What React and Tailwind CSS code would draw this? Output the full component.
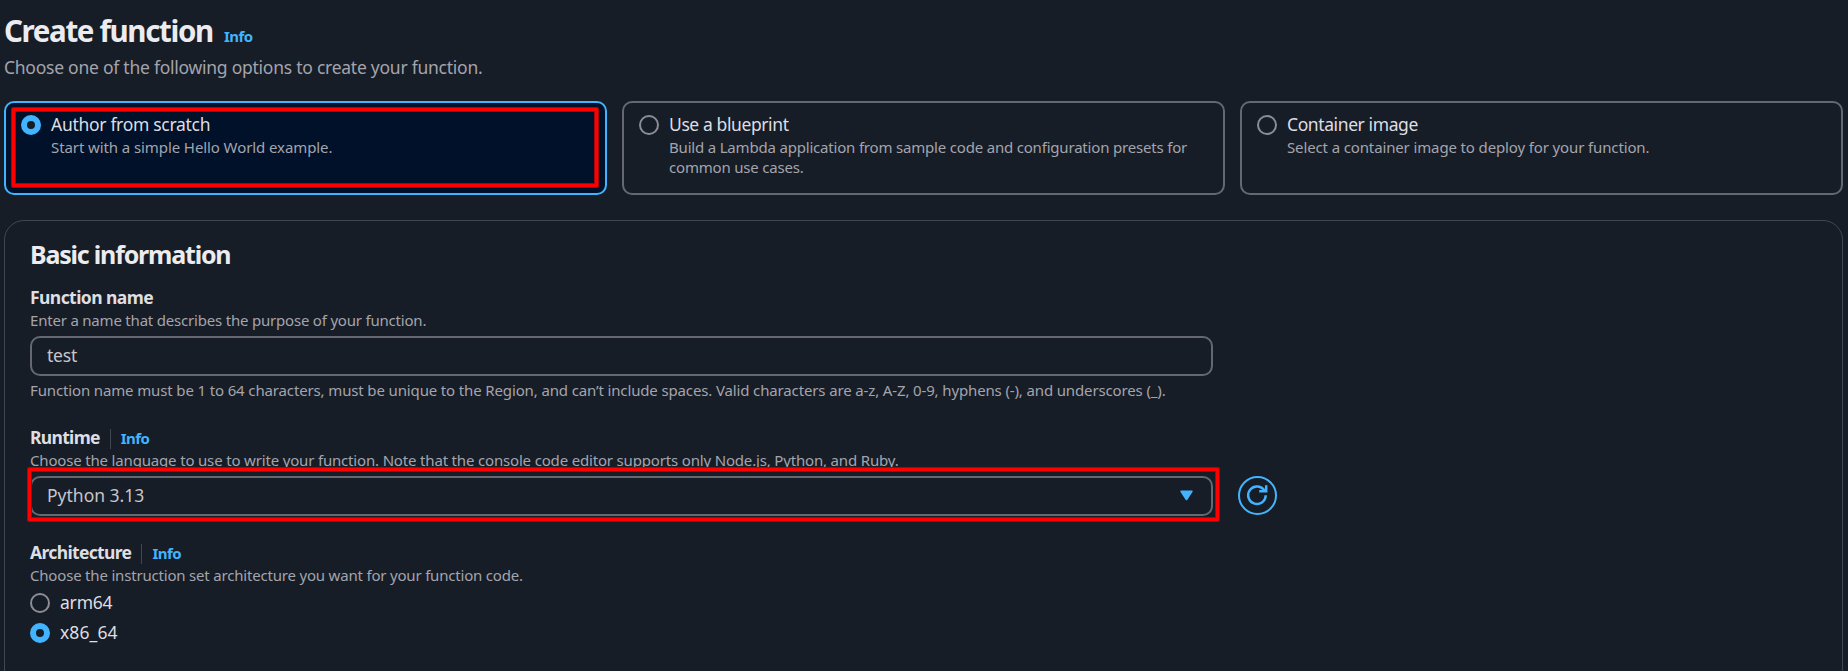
const HINT = 'block text-[15px] leading-5 text-[#a4a4ad]';
const LABEL = 'text-[17.5px] leading-[25px]';

function Radio({ checked }) {
  return checked ? (
    <span className="mt-[3px] size-5 shrink-0 rounded-full border-[6px] border-[#42b4ff] bg-[#161d26]" />
  ) : (
    <span className="mt-[3px] size-5 shrink-0 rounded-full border-2 border-[#8c8c94]" />
  );
}

function Info({ className = '' }) {
  return (
    <a className={'text-[15px] leading-5 font-bold tracking-[-0.55px] text-[#42b4ff] ' + className}>Info</a>
  );
}

function Highlight({ className }) {
  return (
    <span
      className={
        'pointer-events-none absolute rounded-[1px] border-[3px] border-[#ff0000] shadow-[0_0_0_1px_#a8060a,inset_0_0_0_1px_#a8060a] ' +
        className
      }
    />
  );
}

function Tile({ title, titleClass, text, textClass, checked }) {
  return (
    <div
      className={
        'relative flex h-[94px] gap-[10px] rounded-[10px] border-2 pt-[9px] pr-[15px] pl-[15px] ' +
        (checked ? 'border-[#42b4ff] bg-[#001129]' : 'border-[#656871]')
      }
    >
      <Radio checked={checked} />
      <div className="min-w-0">
        <div className={LABEL + ' ' + titleClass}>{title}</div>
        <div className={HINT + ' ' + textClass}>{text}</div>
      </div>
      {checked && <Highlight className="top-[5px] right-[7px] bottom-[6px] left-[6px]" />}
    </div>
  );
}

function FieldHeader({ children, className }) {
  return (
    <div className="flex h-[25px] items-start">
      <span className={LABEL + ' font-bold text-[#dedee3] ' + className}>{children}</span>
      <span className="mt-1 ml-[10px] h-5 w-px bg-[#424650]" />
      <Info className="mt-[3px] ml-[10px]" />
    </div>
  );
}

function RefreshButton() {
  return (
    <button className="ml-[25px] flex size-[39px] items-center justify-center rounded-full border-2 border-[#42b4ff]">
      <svg viewBox="0 0 21 21" className="size-[21px] fill-none stroke-[#42b4ff] stroke-[2.5]">
        <path d="M18.7 10.3A8.75 8.75 0 1 1 17.6 6" />
        <path d="M19.2 0.3V6.3H12.2" />
      </svg>
    </button>
  );
}

export default function App() {
  return (
    <main className="h-[671px] w-full overflow-hidden bg-[#161d26] pt-[13px] pr-[5px] pl-1 font-['Noto_Sans','Open_Sans',sans-serif] text-[#dedee3]">
      <header>
        <div className="flex h-9 items-baseline">
          <h1 className="w-[210px] text-[29.5px] leading-9 font-bold tracking-[-1.35px] whitespace-nowrap text-[#ebebf0]">
            Create function
          </h1>
          <Info className="ml-[10px]" />
        </div>
        <p className="mt-[6px] text-[17.5px] leading-[25px] tracking-[-0.25px] text-[#a4a4ad]">
          Choose one of the following options to create your function.
        </p>
      </header>

      <section className="mt-[21px] grid grid-cols-3 gap-[15px]">
        <Tile
          checked
          title="Author from scratch"
          titleClass="tracking-[-0.3px]"
          text="Start with a simple Hello World example."
          textClass="tracking-[-0.09px]"
        />
        <Tile
          title="Use a blueprint"
          titleClass="tracking-[-0.4px]"
          text="Build a Lambda application from sample code and configuration presets for common use cases."
          textClass="tracking-[-0.19px]"
        />
        <Tile
          title="Container image"
          titleClass="tracking-[-0.4px]"
          text="Select a container image to deploy for your function."
          textClass="tracking-[-0.13px]"
        />
      </section>

      <section className="mt-[25px] h-[500px] rounded-[20px] border border-[#424650] px-[25px] pt-[18px]">
        <h2 className="text-[25px] leading-[30px] font-bold tracking-[-1.2px] text-[#ebebf0]">Basic information</h2>

        <div className="mt-4">
          <div className={LABEL + ' font-bold tracking-[-0.57px]'}>Function name</div>
          <span className={HINT + ' tracking-[-0.2px]'}>Enter a name that describes the purpose of your function.</span>
          <div className="mt-[6px] flex h-10 w-[1183px] items-center rounded-[10px] border-2 border-[#656871] px-[15px] pb-px text-[17.5px] leading-[25px] tracking-[-0.2px] text-[#c6c6cd]">
            test
          </div>
          <span className={HINT + ' mt-1 tracking-[-0.137px]'}>
            Function name must be 1 to 64 characters, must be unique to the Region, and can’t include spaces. Valid
            characters are a-z, A-Z, 0-9, hyphens (-), and underscores (_).
          </span>
        </div>

        <div className="mt-[25px]">
          <FieldHeader className="tracking-[-0.68px]">Runtime</FieldHeader>
          <span className={HINT + ' tracking-[-0.17px]'}>
            Choose the language to use to write your function. Note that the console code editor supports only Node.js,
            Python, and Ruby.
          </span>
          <div className="mt-[6px] flex items-start">
            <div className="relative flex h-10 w-[1183px] items-center justify-between rounded-[10px] border-2 border-[#656871] pr-[18px] pb-px pl-[15px] text-[17.5px] leading-[25px] text-[#c6c6cd]">
              Python 3.13
              <svg viewBox="0 0 13 11" className="h-[11px] w-[13px] fill-[#42b4ff]">
                <path d="M1 0.5H12Q13 0.6 12.6 1.7L7.4 9.8Q6.5 10.8 5.6 9.8L0.4 1.7Q0 0.6 1 0.5Z" />
              </svg>
              <Highlight className="-top-[10px] -right-[8px] -bottom-[7px] -left-1" />
            </div>
            <RefreshButton />
          </div>
        </div>

        <div className="mt-6">
          <FieldHeader className="tracking-[-0.65px]">Architecture</FieldHeader>
          <span className={HINT + ' tracking-[-0.19px]'}>
            Choose the instruction set architecture you want for your function code.
          </span>
          <div className="mt-[5px] flex flex-col gap-[5px]">
            <div className="flex gap-[10px]">
              <Radio />
              <span className={LABEL + ' tracking-[-0.2px]'}>arm64</span>
            </div>
            <div className="flex gap-[10px]">
              <Radio checked />
              <span className={LABEL + ' tracking-[0.1px]'}>x86_64</span>
            </div>
          </div>
        </div>
      </section>
    </main>
  );
}
